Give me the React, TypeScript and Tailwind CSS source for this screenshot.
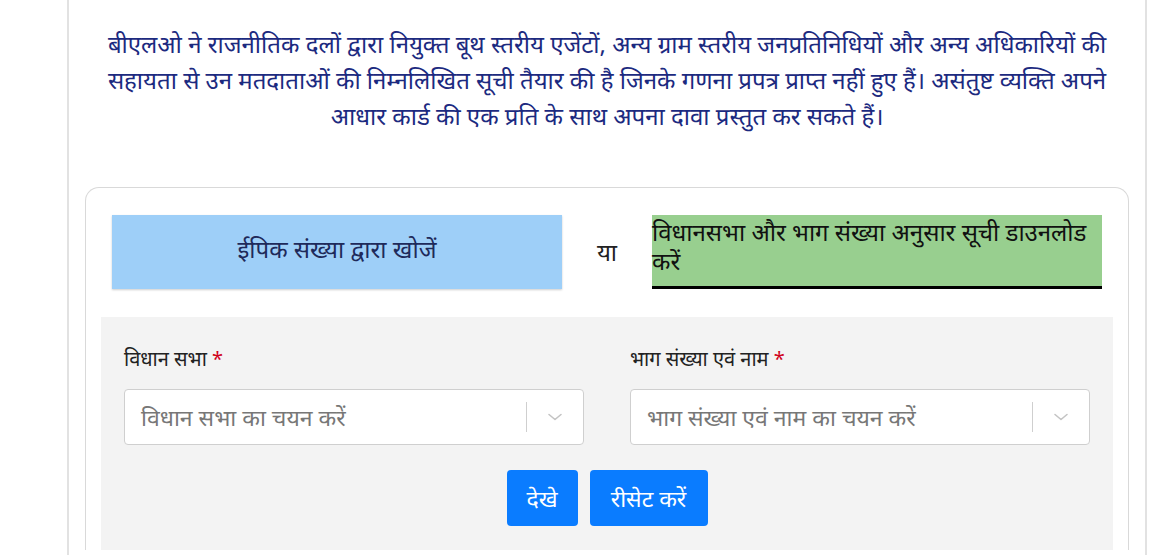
function Chevron() {
  return (
    <svg className="mx-[18px] h-[20px] w-[20px] text-[#c4c4c4]" viewBox="0 0 20 20" fill="none" stroke="currentColor" strokeWidth={1.6}>
      <path d="M4 7.5l6 5 6-5" strokeLinecap="round" strokeLinejoin="round" />
    </svg>
  );
}

export default function App() {
  return (
    <div
      className="h-[555px] w-[1149px] overflow-hidden bg-white"
      style={{ fontFamily: '"Noto Sans", "DejaVu Sans", sans-serif' }}
    >
      <div className="ml-[67px] mr-[2px] h-full border-x-2 border-[#e2e2e2] bg-white">
        {/* Intro */}
        <p className="px-[20px] pt-[26px] text-center text-[24px] leading-[36px] text-[#1c2a80]">
          बीएलओ ने राजनीतिक दलों द्वारा नियुक्त बूथ स्तरीय एजेंटों, अन्य ग्राम स्तरीय जनप्रतिनिधियों और अन्य अधिकारियों की
          <br />
          सहायता से उन मतदाताओं की निम्नलिखित सूची तैयार की है जिनके गणना प्रपत्र प्राप्त नहीं हुए हैं। असंतुष्ट व्यक्ति अपने
          <br />
          आधार कार्ड की एक प्रति के साथ अपना दावा प्रस्तुत कर सकते हैं।
        </p>

        {/* Card */}
        <div className="mx-[16px] mt-[53px] rounded-t-[14px] border border-b-0 border-[#d9d9d9] px-[15px] pt-[27px]">
          <div className="flex items-center px-[11px]">
            <button className="flex h-[74px] w-[450px] items-start justify-center bg-[#9ecff8] pt-[16px] text-[24px] text-[#1e2a5a] shadow-[0_1px_2px_rgba(0,0,0,0.2)]">
              ईपिक संख्या द्वारा खोजें
            </button>
            <span className="w-[90px] text-center text-[24px] text-[#222]">या</span>
            <a className="h-[74px] w-[450px] border-b-[3px] border-black bg-[#98cf8f] pt-[2px] text-[24px] leading-[29px] text-[#111]">
              विधानसभा और भाग संख्या अनुसार सूची डाउनलोड करें
            </a>
          </div>

          {/* Filters */}
          <div className="mt-[28px] bg-[#f3f3f3] px-[23px] pb-[24px] pt-[28px]">
            <div className="grid grid-cols-2 gap-x-[46px]">
              <div>
                <label className="block text-[20px] leading-[28px] text-[#222]">
                  विधान सभा <span className="text-[#d0021b]">*</span>
                </label>
                <div className="mt-[16px] flex h-[56px] items-center rounded-[4px] border border-[#cfcfcf] bg-white pl-[16px]">
                  <span className="flex-1 text-[23px] text-[#777]">विधान सभा का चयन करें</span>
                  <span className="h-[30px] w-px bg-[#cfcfcf]" />
                  <Chevron />
                </div>
              </div>
              <div>
                <label className="block text-[20px] leading-[28px] text-[#222]">
                  भाग संख्या एवं नाम <span className="text-[#d0021b]">*</span>
                </label>
                <div className="mt-[16px] flex h-[56px] items-center rounded-[4px] border border-[#cfcfcf] bg-white pl-[16px]">
                  <span className="flex-1 text-[23px] text-[#777]">भाग संख्या एवं नाम का चयन करें</span>
                  <span className="h-[30px] w-px bg-[#cfcfcf]" />
                  <Chevron />
                </div>
              </div>
            </div>
            <div className="mt-[25px] flex justify-center gap-[12px]">
              <button className="h-[56px] w-[71px] rounded-[4px] bg-[#0a7cff] text-[23px] text-white">देखे</button>
              <button className="h-[56px] w-[118px] rounded-[4px] bg-[#0a7cff] text-[23px] text-white">रीसेट करें</button>
            </div>
          </div>
        </div>
      </div>
    </div>
  );
}
